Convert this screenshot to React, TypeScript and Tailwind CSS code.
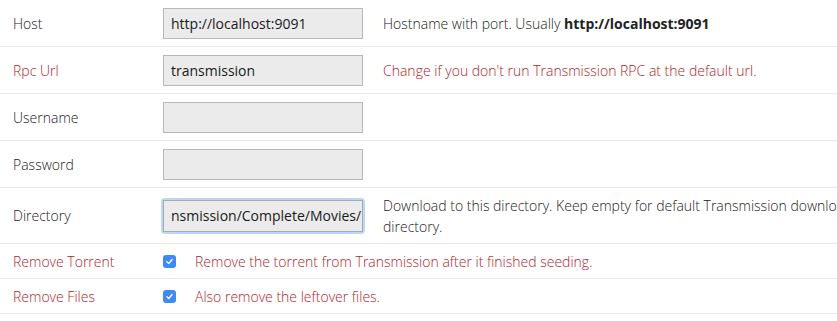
import React from 'react';

type Field = {
  label: string;
  value?: string;
  help?: React.ReactNode;
  warn?: boolean;
};

const inputs: Field[] = [
  {
    label: 'Host',
    value: 'http://localhost:9091',
    help: (
      <>
        Hostname with port. Usually <b className="font-bold text-[#222]">http://localhost:9091</b>
      </>
    ),
  },
  {
    label: 'Rpc Url',
    value: 'transmission',
    warn: true,
    help: "Change if you don't run Transmission RPC at the default url.",
  },
  { label: 'Username' },
  { label: 'Password' },
];

const checks: Field[] = [
  { label: 'Remove Torrent', help: 'Remove the torrent from Transmission after it finished seeding.' },
  { label: 'Remove Files', help: 'Also remove the leftover files.' },
];

function Checkbox() {
  return (
    <span className="flex shrink-0 h-[13px] w-[13px] items-center justify-center rounded-[3px] bg-[#3d8af7]">
      <svg viewBox="0 0 12 12" className="h-[9px] w-[9px]">
        <path d="M2.5 6.3 L5 8.6 L9.5 3.4" fill="none" stroke="white" strokeWidth="1.8" strokeLinecap="round" strokeLinejoin="round" />
      </svg>
    </span>
  );
}

export default function App() {
  return (
    <div className="w-[837px] h-[321px] overflow-hidden bg-white font-['Open_Sans',sans-serif] font-light text-[14px] text-[#222]">
      {inputs.map((f) => (
        <div key={f.label} className="flex items-center h-[47px] border-b border-[#e8e8e8]">
          <span className={`w-[163px] shrink-0 pl-[13px] ${f.warn ? 'text-[#b01c2b]' : ''}`}>{f.label}</span>
          <div className="flex shrink-0 items-center w-[200px] h-[31px] px-[7px] bg-[#ebebeb] border border-[#b9b9b9] font-normal text-[14px] text-[#1a1a1a] whitespace-nowrap overflow-hidden">
            {f.value}
          </div>
          {f.help && (
            <span className={`ml-[20px] whitespace-nowrap ${f.warn ? 'text-[#b01c2b]' : ''}`}>{f.help}</span>
          )}
        </div>
      ))}
      {/* directory input is focused, text scrolled to the end */}
      <div className="flex items-center h-[56px] border-b border-[#e8e8e8]">
        <span className="w-[161px] shrink-0 pl-[13px]">Directory</span>
        <div className="shrink-0 rounded-[4px] p-[2px] bg-[#bcd8f8]">
          <div className="flex items-center w-[200px] h-[32px] px-[7px] bg-[#ebebeb] border border-[#a9a9a9] font-normal text-[14px] text-[#1a1a1a] whitespace-nowrap overflow-hidden">
            nsmission/Complete/Movies/
          </div>
        </div>
        <span className="ml-[18px] leading-[21px] w-[500px] shrink-0">
          Download to this directory. Keep empty for default Transmission download directory.
        </span>
      </div>
      {checks.map((f) => (
        <div key={f.label} className="flex items-center h-[35px] border-b border-[#e8e8e8] text-[#b01c2b]">
          <span className="w-[163px] shrink-0 pl-[13px]">{f.label}</span>
          <Checkbox />
          <span className="ml-[19px] whitespace-nowrap">{f.help}</span>
        </div>
      ))}
    </div>
  );
}
